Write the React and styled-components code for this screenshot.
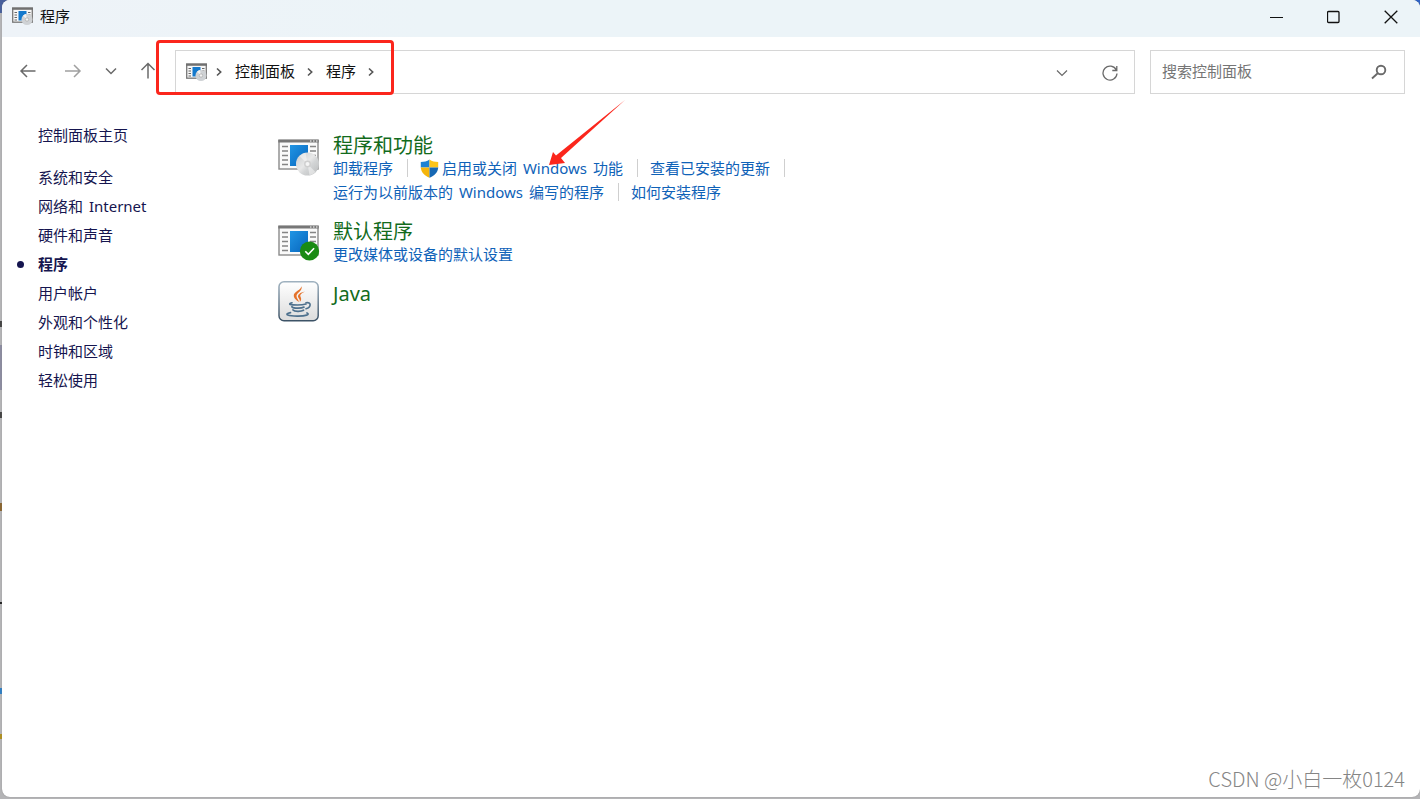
import React from "react";
import styled, { createGlobalStyle } from "styled-components";

const Global = createGlobalStyle`
  * { box-sizing: border-box; }
  body {
    margin: 0;
    font-family: "Noto Sans", "Noto Sans CJK SC", sans-serif;
    font-size: 15px;
    line-height: 24px;
    color: #111;
  }
  button { font: inherit; color: inherit; }
  ul { list-style: none; margin: 0; padding: 0; }
`;

const Desktop = styled.div`
  min-height: 100vh;
  display: flex;
  padding: 0 0 2px 2px;
  background:
    linear-gradient(#2f62c4, #2f62c4) right top / 12px 10px no-repeat,
    linear-gradient(#48609c, #48609c) left top / 12px 13px no-repeat,
    linear-gradient(#8c8ca0, #8c8ca0) left 345px / 2px 45px no-repeat,
    linear-gradient(#444, #444) left 321px / 2px 6px no-repeat,
    linear-gradient(#444, #444) left 412px / 2px 6px no-repeat,
    linear-gradient(#8a6530, #8a6530) left 503px / 2px 8px no-repeat,
    linear-gradient(#222, #222) left 602px / 2px 2px no-repeat,
    linear-gradient(#2f7fc4, #2f7fc4) left 688px / 2px 6px no-repeat,
    linear-gradient(#b09020, #b09020) left 734px / 2px 5px no-repeat,
    #b4b4b6;
`;

const Window = styled.div`
  flex: 1;
  min-width: 0;
  display: flex;
  flex-direction: column;
  background: #fff;
  border-radius: 8px;
  overflow: hidden;
  box-shadow: 0 0 1px #777;
`;

const TitleBar = styled.header`
  display: flex;
  height: 37px;
  background: linear-gradient(90deg, #eef3f8, #ecf4f8 30%);
`;

const Title = styled.h1`
  flex: 1;
  display: flex;
  align-items: center;
  gap: 7px;
  margin: 0;
  padding: 0 10px 5px;
  font-size: 15px;
  font-weight: 400;
  line-height: 22px;
`;

const IconButton = styled.button`
  display: flex;
  align-items: center;
  justify-content: center;
  width: ${(p) => p.$width}px;
  padding: 0;
  border: 0;
  background: none;
  color: ${(p) => p.$color || "#6a6a6a"};
`;

const NavButton = styled(IconButton)`
  padding-bottom: 2px;
`;

const WindowControls = styled.div`
  display: flex;
  padding-bottom: 3px;
`;

const NavBar = styled.nav`
  display: flex;
  padding: 13px 15px 0 4px;
  height: 57px;
`;

const AddressBar = styled.div`
  position: relative;
  flex: 1;
  display: flex;
  align-items: center;
  margin: 0 15px 0 5px;
  padding: 0 0 0 10px;
  border: 1px solid #d6d6d6;
`;

const Crumb = styled.a`
  padding: 0 3px 2px 0;
  color: #111;
  text-decoration: none;
`;

const CrumbArrow = styled.svg`
  width: 10px;
  height: 12px;
  margin: 0 11px 0 7px;
`;

const Spacer = styled.div`
  flex: 1;
`;

const HighlightBox = styled.div`
  position: absolute;
  top: -11px;
  left: -20px;
  width: 238px;
  height: 55px;
  border: 3px solid #fb261c;
  border-radius: 4px;
  pointer-events: none;
`;

const SearchBox = styled.form`
  display: flex;
  flex: 0 1 255px;
  min-width: 0;
  padding: 0 7px 0 11px;
  border: 1px solid #d6d6d6;
`;

const SearchInput = styled.input`
  flex: 1;
  width: 100%;
  min-width: 0;
  padding: 0 0 2px;
  border: 0;
  outline: 0;
  background: none;
  font: inherit;
  &::placeholder { color: #757575; opacity: 1; }
`;

const Body = styled.div`
  flex: 1;
  display: flex;
`;

const Sidebar = styled.aside`
  flex: 0 0 276px;
  padding: 27px 0 0 15px;
  line-height: 29px;
`;

const SideList = styled.ul`
  margin-top: 13px;
`;

const SideItem = styled.div`
  display: flex;
  align-items: center;
`;

const Bullet = styled.span`
  width: 7px;
  height: 7px;
  margin-right: 14px;
  border-radius: 50%;
  background: ${(p) => (p.$on ? "#15154f" : "transparent")};
`;

const SideLink = styled.a`
  color: #15154f;
  text-decoration: none;
  font-weight: ${(p) => (p.$on ? 700 : 400)};
`;

const Latin = styled.span`
  margin: 0 2px;
`;

const Main = styled.main`
  flex: 1;
  display: flex;
  flex-direction: column;
  gap: 14px;
  padding: 39px 0 0;
`;

const Category = styled.section`
  display: flex;
  gap: 13px;
`;

const CategoryTitle = styled.h2`
  height: 24px;
  margin: 0;
  font-size: 20px;
  font-weight: 400;
  line-height: 26px;
  a { color: #126b1c; text-decoration: none; }
`;

const TaskRow = styled.div`
  display: flex;
  align-items: center;
  height: 24px;
  padding-bottom: 2px;
`;

const Task = styled.a`
  position: relative;
  display: flex;
  align-items: center;
  gap: 3px;
  color: #0f62b8;
  text-decoration: none;
  white-space: nowrap;
`;

const Divider = styled.span`
  width: 1px;
  height: 18px;
  margin: 0 12px 0 14px;
  background: #cfcfcf;
`;

const PointerArrow = styled.svg`
  position: absolute;
  left: 128px;
  top: -57px;
  width: 78px;
  height: 68px;
  pointer-events: none;
`;

const Watermark = styled.footer`
  padding: 0 15px 6px;
  text-align: right;
  font-family: "Noto Sans CJK SC", sans-serif;
  font-size: 20px;
  font-weight: 300;
  color: #858585;
`;

function Frame() {
  return (
    <g>
      <rect x="1" y="7.5" width="39" height="28.5" fill="#fafafa" stroke="#8b8b8b" strokeWidth="1.4" />
      <rect x="0.3" y="6.5" width="40.4" height="3" fill="#777" />
      <path d="M32 8h1.5M35 8h1.5M38 8h1.5" stroke="#fff" strokeWidth="1" />
      <path
        d="M4 13.5h6M4 18h6M4 22.5h6M4 27h6M4 31.5h6M32 13.5h6M32 18h6M32 22.5h6"
        stroke="#858585"
        strokeWidth="1.4"
      />
      <rect x="12" y="12" width="18" height="21" fill="url(#blue)" />
    </g>
  );
}

function ProgramsIcon() {
  return (
    <svg width="42" height="44" viewBox="0 0 42 44" aria-hidden="true">
      <defs>
        <linearGradient id="blue" x1="0" y1="0" x2="1" y2="1">
          <stop offset="0" stopColor="#2095e4" />
          <stop offset="1" stopColor="#0865bd" />
        </linearGradient>
        <linearGradient id="disc" x1="0" y1="0" x2="1" y2="1">
          <stop offset="0" stopColor="#c8cbcd" />
          <stop offset=".45" stopColor="#e8e8e8" />
          <stop offset=".6" stopColor="#d3d5d6" />
          <stop offset="1" stopColor="#b8babb" />
        </linearGradient>
      </defs>
      <Frame />
      <circle cx="29.5" cy="31" r="11.5" fill="url(#disc)" />
      <path d="M29.5 31 21.500 23A11.5 11.5 0 0 1 27.5 19.800zM29.5 31l8 8a11.5 11.5 0 0 1-6 3.2z" fill="#fff" opacity=".45" />
      <circle cx="29.5" cy="31" r="3.4" fill="#cfcfcf" />
      <circle cx="29.5" cy="31" r="2" fill="#f5f5f5" />
    </svg>
  );
}

function DefaultsIcon() {
  return (
    <svg width="42" height="44" viewBox="0 0 42 44" aria-hidden="true">
      <Frame />
      <circle cx="31.5" cy="32" r="9.6" fill="#1a8b14" />
      <path d="m27.300 32.300 3 3 5.8-6" fill="none" stroke="#fff" strokeWidth="1.6" />
    </svg>
  );
}

function JavaIcon() {
  return (
    <svg width="42" height="42" viewBox="0 0 42 42" aria-hidden="true">
      <defs>
        <linearGradient id="tile" x1="0" y1="0" x2="0" y2="1">
          <stop offset="0" stopColor="#fff" />
          <stop offset="1" stopColor="#dcdcdc" />
        </linearGradient>
        <linearGradient id="rim" x1="0" y1="0" x2="0" y2="1">
          <stop offset="0" stopColor="#9fb1bf" />
          <stop offset="1" stopColor="#3c5266" />
        </linearGradient>
      </defs>
      <rect x="1" y="0.8" width="39.2" height="39" rx="5" fill="url(#tile)" stroke="url(#rim)" strokeWidth="1.5" />
      <g fill="#e5722a">
        <path d="M23.300 5.200c2 4.200-4.500 6.300-4.800 9.600-.2 2.200 1.800 3.600 2.600 6.200-3.200-1.900-6-4.300-5.200-7.400.9-3.500 7.200-4.500 7.400-8.400z" />
        <path d="M27 10.600c-3.600 1.800-5.400 3.200-4.600 5 .8 1.600 1.500 3.400-.6 5.500.4-2.100-.4-2.800-1.400-4.400-1.600-2.700 1.800-5.200 6.600-6.100z" />
      </g>
      <g fill="none" strokeLinecap="round" stroke="#4d708d">
        <path d="M14 21.800c-4.500 1.300-2 2.200 5.500 2.200 4 0 6.500-.4 8.500-1" strokeWidth="1.700" />
        <path d="M14 25.800c1.500 1.800 9.500 1.800 12 .3M15 29c1.500 1.700 8 1.700 10.500.3" strokeWidth="1.800" />
        <path d="M28 21.800c5.500-1.200 5.500 4.200 0 6" strokeWidth="1.600" />
        <path d="M12.500 31.600c-7.500 1.700-2 3.600 7.500 3.500 7.500-.1 12.500-1.500 9-3.200" strokeWidth="1.700" />
      </g>
    </svg>
  );
}

function SmallProgramsIcon() {
  return (
    <svg width="21" height="20" viewBox="0 0 21 20" aria-hidden="true">
      <rect x="0.700" y="2.200" width="19.600" height="14" fill="#f6f6f6" stroke="#777" strokeWidth="1.300" />
      <rect x="0" y="1.500" width="21" height="2.300" fill="#707070" />
      <path d="M2.500 6.500h2.500M2.500 9h2.500M2.500 11.500h2.500M2.500 14h2.500M16 6.500h2.500M16 9h2.500" stroke="#666" strokeWidth="1.100" />
      <rect x="6.500" y="5" width="8" height="9.500" fill="#1479cc" />
      <circle cx="15" cy="13.500" r="5.500" fill="#cfd2d5" />
      <path d="m15 13.500-4-3.800A5.500 5.500 0 0 1 14 8.100z" fill="#f2f2f2" />
      <circle cx="15" cy="13.500" r="1.700" fill="#f4f4f4" stroke="#a8a8a8" strokeWidth=".7" />
    </svg>
  );
}

function ShieldIcon() {
  return (
    <svg width="19" height="19" viewBox="0 0 19 19" aria-hidden="true">
      <path d="M9.500.5C7 2.300 4 3 .8 3v5.500h8.700z" fill="#1c82d4" />
      <path d="M9.500.5C12 2.300 15 3 18.200 3v5.500H9.500z" fill="#fcc419" />
      <path d="M.8 8.500c.3 5 4 8.300 8.700 10.200V8.500z" fill="#f5b50c" />
      <path d="M18.200 8.500c-.3 5-4 8.300-8.700 10.200V8.500z" fill="#1668b4" />
    </svg>
  );
}

const Stroke = ({ w = 18, h = 18, d, sw = 1.5 }) => (
  <svg width={w} height={h} viewBox={`0 0 ${w} ${h}`} fill="none" stroke="currentColor" strokeWidth={sw} aria-hidden="true">
    <path d={d} />
  </svg>
);

const Arrow = () => (
  <CrumbArrow viewBox="0 0 10 12" fill="none" stroke="#555" strokeWidth="1.600" aria-hidden="true">
    <path d="m3 2.500 3.700 3.500L3 9.500" />
  </CrumbArrow>
);

const sideItems = [
  { name: "系统和安全" },
  { name: "网络和", latin: "Internet" },
  { name: "硬件和声音" },
  { name: "程序", current: true },
  { name: "用户帐户" },
  { name: "外观和个性化" },
  { name: "时钟和区域" },
  { name: "轻松使用" },
];

export default function App() {
  return (
    <Desktop>
      <Global />
      <Window>
        <TitleBar>
          <Title>
            <SmallProgramsIcon />
            程序
          </Title>
          <WindowControls>
            <IconButton $width={57} $color="#111" aria-label="最小化">
              <Stroke w={14} h={14} d="M0 7.500h13" sw={1.2} />
            </IconButton>
            <IconButton $width={57} $color="#111" aria-label="最大化">
              <Stroke w={14} h={14} d="M1.500 1.500h9.500a1 1 0 0 1 1 1v9a1 1 0 0 1-1 1h-9.500a1 1 0 0 1-1-1v-9a1 1 0 0 1 1-1z" sw={1.3} />
            </IconButton>
            <IconButton $width={58} $color="#111" aria-label="关闭">
              <Stroke w={14} h={14} d="m.7.7 12.600 12.600M13.300.7.7 13.300" sw={1.3} />
            </IconButton>
          </WindowControls>
        </TitleBar>
        <NavBar>
          <NavButton $width={44} aria-label="后退">
            <Stroke d="M16.500 9H2M8 3 2 9 8 15" />
          </NavButton>
          <NavButton $width={46} $color="#a0a0a0" aria-label="前进">
            <Stroke d="M1 9h15M10 3 16 9 10 15" />
          </NavButton>
          <NavButton $width={30} aria-label="最近浏览的位置">
            <Stroke w={12} h={12} d="m1 3.500 5 5 5-5" />
          </NavButton>
          <NavButton $width={44} aria-label="向上">
            <Stroke d="M9 16.500V2M2.500 8 9 1.500 15.500 8" />
          </NavButton>
          <AddressBar>
            <SmallProgramsIcon />
            <Arrow />
            <Crumb href="#home">控制面板</Crumb>
            <Arrow />
            <Crumb href="#programs">程序</Crumb>
            <Arrow />
            <Spacer />
            <IconButton $width={48} aria-label="历史记录">
              <Stroke w={12} h={12} d="m1 4.500 5 5 5-5" sw={1.2} />
            </IconButton>
            <IconButton $width={48} aria-label="刷新">
              <Stroke d="M15.300 7A7 7 0 1 0 16 10.500M15.800 3v4.500h-4.500" sw={1.3} />
            </IconButton>
            <HighlightBox />
          </AddressBar>
          <SearchBox role="search">
            <SearchInput type="text" aria-label="搜索控制面板" placeholder="搜索控制面板" />
            <IconButton $width={36} type="button" aria-label="搜索">
              <svg width="16" height="16" viewBox="0 0 16 16" fill="none" stroke="currentColor" strokeWidth="1.900" aria-hidden="true">
                <circle cx="10" cy="6" r="4.300" />
                <path d="M7 9 1 14.500" />
              </svg>
            </IconButton>
          </SearchBox>
        </NavBar>
        <Body>
          <Sidebar>
            <SideItem>
              <Bullet />
              <SideLink href="#home">控制面板主页</SideLink>
            </SideItem>
            <SideList>
              {sideItems.map((item) => (
                <SideItem as="li" key={item.name}>
                  <Bullet $on={item.current} />
                  <SideLink href="#" $on={item.current}>
                    {item.name}
                    {item.latin && <> <Latin>{item.latin}</Latin></>}
                  </SideLink>
                </SideItem>
              ))}
            </SideList>
          </Sidebar>
          <Main>
            <Category>
              <ProgramsIcon />
              <div>
                <CategoryTitle><a href="#features">程序和功能</a></CategoryTitle>
                <TaskRow>
                  <Task href="#uninstall">卸载程序</Task>
                  <Divider />
                  <Task href="#windows-features">
                    <ShieldIcon />
                    <span>启用或关闭 <Latin>Windows</Latin> 功能</span>
                    <PointerArrow viewBox="0 0 78 68" aria-hidden="true">
                      <path d="M77 1 13 59l4 5L1 66 5 53l3 3.500z" fill="#fb261c" />
                    </PointerArrow>
                  </Task>
                  <Divider />
                  <Task href="#updates">查看已安装的更新</Task>
                  <Divider />
                </TaskRow>
                <TaskRow>
                  <Task href="#compat"><span>运行为以前版本的 <Latin>Windows</Latin> 编写的程序</span></Task>
                  <Divider />
                  <Task href="#install">如何安装程序</Task>
                </TaskRow>
              </div>
            </Category>
            <Category>
              <DefaultsIcon />
              <div>
                <CategoryTitle><a href="#defaults">默认程序</a></CategoryTitle>
                <TaskRow>
                  <Task href="#media">更改媒体或设备的默认设置</Task>
                </TaskRow>
              </div>
            </Category>
            <Category>
              <JavaIcon />
              <CategoryTitle><a href="#java">Java</a></CategoryTitle>
            </Category>
          </Main>
        </Body>
        <Watermark>CSDN @小白一枚0124</Watermark>
      </Window>
    </Desktop>
  );
}
